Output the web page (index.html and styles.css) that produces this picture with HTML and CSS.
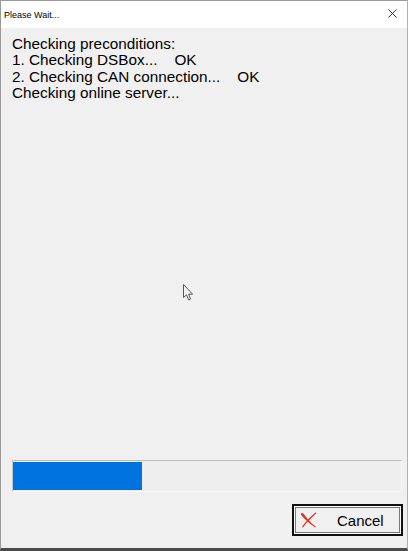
FILE: index.html
```html
<!DOCTYPE html>
<html>
<head>
<meta charset="utf-8">
<link rel="stylesheet" href="styles.css">
</head>
<body>
<div class="window">
  <div class="titlebar">
    <span class="title">Please Wait...</span>
    <svg class="close" width="10" height="10" viewBox="0 0 10 10"><path d="M0.5 0.5 L9.5 9.5 M9.5 0.5 L0.5 9.5" stroke="#222" stroke-width="1" fill="none"/></svg>
  </div>
  <div class="client">
    <div class="log">
      <div class="line">Checking preconditions:</div>
      <div class="line">1. Checking DSBox...    OK</div>
      <div class="line">2. Checking CAN connection...    OK</div>
      <div class="line">Checking online server...</div>
    </div>
    <div class="progress"><div class="fill" style="width:129px"></div></div>
    <div class="actions">
      <button class="btn">
        <svg class="xicon" width="17" height="16" viewBox="0 0 17 16">
          <path d="M1.2 1.6 C2 0.8 3 1 3.6 1.8 C6.5 5.8 10 10.5 15.6 14.6 C15.9 14.9 15.5 15.4 15 15.2 C9.4 12 5.2 7.3 1.4 3.2 C0.9 2.7 0.8 2 1.2 1.6 Z" fill="#e2301c"/>
          <path d="M15.8 0.6 C16.2 0.8 16.2 1.3 15.9 1.6 C11.5 5.8 7 10.2 3.3 15 C2.9 15.5 2 15.4 2 14.8 C5.6 9.6 10.3 4.9 15 0.8 C15.3 0.5 15.6 0.5 15.8 0.6 Z" fill="#e2301c"/>
        </svg>
        <span class="label">Cancel</span>
      </button>
    </div>
  </div>
  <svg class="cursor" width="12" height="18" viewBox="0 0 12 18">
    <path d="M0.5 0.5 L0.5 13.5 L3.5 10.8 L5.6 15.8 L7.6 15 L5.6 10.2 L9.6 10.2 Z" fill="#f4f4f4" stroke="#555" stroke-width="1" stroke-linejoin="round"/>
  </svg>
</div>
</body>
</html>
```

FILE: styles.css
```css
html, body {
  margin: 0;
  padding: 0;
  background: #f0f0f0;
}

.window {
  position: relative;
  box-sizing: border-box;
  width: 408px;
  height: 551px;
  display: flex;
  flex-direction: column;
  border-top: 1px solid #9a9a9a;
  border-left: 1px solid #9a9a9a;
  border-right: 1px solid #b0b0b0;
  border-bottom: 3px solid #4a4a4a;
  background: #f0f0f0;
  font-family: "Liberation Sans", Arial, sans-serif;
}

.titlebar {
  height: 27px;
  background: #ffffff;
  display: flex;
  align-items: center;
  justify-content: space-between;
  padding: 0 10px 0 3px;
  flex: none;
}

.title {
  font-size: 9px;
  color: #000;
  margin-top: 1px;
}

.close {
  display: block;
  width: 9px;
  height: 9px;
  margin-top: -2px;
}

.client {
  flex: 1;
  display: flex;
  flex-direction: column;
  padding: 8px 4px 12px 11px;
}

.log {
  flex: 1;
  font-size: 15.3px;
  line-height: 16.4px;
  color: #000;
}

.line {
  white-space: pre;
}

.progress {
  height: 28px;
  border-top: 1px solid #bcbcbc;
  border-left: 1px solid #c4c4c4;
  border-right: 1px solid #f8f8f8;
  border-bottom: 1px solid #f8f8f8;
  padding: 1px 1px 1px 0;
  margin-right: 1px;
  background: #eeeeee;
  display: flex;
}

.fill {
  height: 100%;
  background: #0073e0;
}

.actions {
  display: flex;
  justify-content: flex-end;
  margin-top: 12px;
}

.btn {
  box-sizing: border-box;
  width: 111px;
  height: 32px;
  margin: 0;
  padding: 0 0 0 6px;
  border: 2px solid #111;
  background: #f0f0f0;
  box-shadow: inset 0 0 0 1px #fbfbfb, inset 0 0 0 2px #7a7a7a;
  display: flex;
  align-items: center;
  font-family: "Liberation Sans", Arial, sans-serif;
  font-size: 15px;
  color: #000;
}

.xicon {
  display: block;
  flex: none;
}

.label {
  margin-left: 20px;
  margin-top: 1px;
}

.cursor {
  position: absolute;
  left: 182px;
  top: 283px;
}
```
